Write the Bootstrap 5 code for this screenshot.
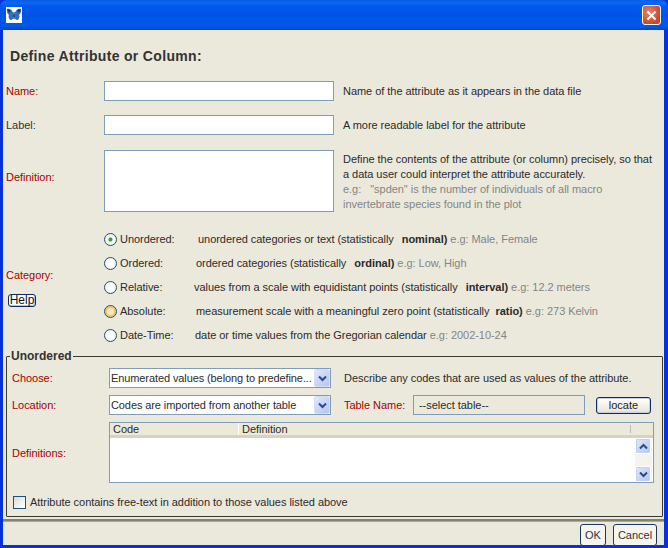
<!DOCTYPE html>
<html lang="en"><head><meta charset="utf-8"><title>Define Attribute</title>
<link rel="stylesheet" href="https://cdn.jsdelivr.net/npm/bootstrap@5.3.0/dist/css/bootstrap.min.css">
<style>
html,body{margin:0;height:548px;width:668px;overflow:hidden;background:#ebe9dc}
body{font-family:"Liberation Sans",Arial,sans-serif;font-size:11px;line-height:14px;color:#2b2b2b;letter-spacing:-.04px}
.win{width:668px;height:548px;background:#0831d9}
.ttl{height:30px;padding:0 7px 0 6px;background:linear-gradient(180deg,#0a5ae0 0,#0a6af5 3px,#0058ee 6px,#0054e3 16px,#0058e8 26px,#0046d0 30px);border-radius:7px 7px 0 0}
.ico{width:16px;height:16px;background:#fff;display:block}
.xbtn{width:19px;height:20px;padding:0;border:1px solid #fff;border-radius:3px;background:radial-gradient(circle at 35% 35%,#e8856a,#c8452a 75%);display:flex;align-items:center;justify-content:center}
.pane{margin:0 4px 3px 3px;height:515px;background:#ebe9dc}
.hd{height:51px;padding:16px 0 0 7px;font-size:14px;line-height:20px;font-weight:700;letter-spacing:.33px;margin:0;color:#333}
.frow{display:grid;grid-template-columns:89px 230px 1fr;column-gap:9px;padding-left:3px}
.lbl{color:#333}.req{color:#a80000}
.mid{align-self:center}
.ibox{display:block;width:230px;height:20px;border:1px solid #7f9db9;background:#fff;padding:0 2px;border-radius:0;font-size:11px}
.r1{height:19px;margin-bottom:15px}.r2{height:20px;margin-bottom:15px}.r3{height:62px;margin-bottom:15px}
.tarea{height:62px;resize:none}
.dfl{padding-top:20px}
.dsc{line-height:15px;padding:2px 5px 0 0}
.muted{color:#858585}
.catg{display:grid;grid-template-columns:98px 1fr;height:120px;padding-left:3px;margin-bottom:2px}
.cats{display:flex;flex-direction:column;padding-left:0}
.crow{height:24px;display:flex;align-items:center;white-space:nowrap}
.rad{appearance:none;width:13px;height:13px;margin:0 3px 0 0;flex:none;border:1px solid #1c5180;border-radius:50%;background:radial-gradient(circle,#fff 30%,#e6e4da 100%)}
.rad:checked{background:radial-gradient(circle,#2fa32f 0,#2fa32f 20%,#fff 32%,#e6e4da 100%)}
.rad.hot{box-shadow:inset 0 0 0 2px #f5c465;background:#f6e6c2}
.w78{display:inline-block;width:78px}.w76{display:inline-block;width:76px}.w74{display:inline-block;width:74px}.w75{display:inline-block;width:75px}
.bb{font-weight:700;margin:0 0 0 8px;font-size:11px}
.bb.nar{margin-left:6px}
.catl{padding-top:41px}
.hlp{display:block;height:13px;width:28px;margin:12px 0 0 2px;padding:0;font-size:12px;line-height:11px;background:#fff;border:1px solid #0a2a6a;border-radius:3px;color:#111;box-shadow:inset -1px -1px 0 #b8c4de}
.fset{margin:0 0 0 3px;width:657px;height:168px;border:1px solid #3a3a32;border-radius:1px;padding:0 5px 0 5px;display:block}
.fset legend{float:none;width:auto;margin:-7px 0 0 -2px;padding:0 1px;font-size:12px;line-height:14px;font-weight:700;color:#333;letter-spacing:0}
.gr{display:grid;grid-template-columns:97px 222px 1fr;align-items:center;height:20px;margin-bottom:7px}
.gr.top1{margin-top:5px}
.sel{display:flex;width:222px;height:20px;border:1px solid #7f9db9;background:#fff;align-items:center;padding-left:1px;white-space:nowrap;overflow:hidden;letter-spacing:-.1px}
.sel span{flex:1;min-width:0}
.arr{flex:none;width:16px;height:18px;margin-right:0;border-radius:2px;background:linear-gradient(135deg,#dfe8fb,#b3c6f0);border:1px solid #d4def7;display:flex;align-items:center;justify-content:center}
.rest{display:flex;align-items:center;padding-left:13px}
.tn{width:69px}
.ro{width:172px;height:20px;border:1px solid #7f9db9;padding:0 5px;line-height:18px}
.loc{width:55px;height:17px;margin-left:11px;padding:0;font-size:11px;line-height:13px;background:linear-gradient(180deg,#fff,#ece9d8 85%,#d6d0c0);border:1px solid #0a2a6a;border-radius:3px;color:#222;box-shadow:inset 0 0 0 1px #c5d0ee}
.tb{display:grid;grid-template-columns:97px 1fr;height:61px}
.tbl{width:545px;height:61px;border:1px solid #7f9db9;display:flex;flex-direction:column;background:#ece9d8}
.ths{display:flex;border-bottom:3px solid #d8d2c0;height:15px;line-height:13px}
.ths div:first-child{width:129px;padding-left:3px;border-right:1px solid #fff}
.ths div:nth-child(2){flex:1;padding-left:3px}
.ths div:last-child{width:23px;border-left:1px solid #bbb;height:8px;margin-top:2px}
.tbd{flex:1;display:flex;background:#fff}
.tbd>div:first-child{flex:1}
.vsb{width:17px;display:flex;flex-direction:column;justify-content:space-between;background:#f4f3ee;margin-right:1px}
.sbtn{height:16px;width:16px;background:linear-gradient(135deg,#dfe8fb,#b3c6f0);border:1px solid #fff;border-radius:2px;display:flex;align-items:center;justify-content:center;box-shadow:0 0 0 1px #c5d0ee inset}
.chk{display:flex;align-items:center;height:14px;margin:12px 0 0 1px}
.cbx{appearance:none;width:13px;height:13px;margin:0 4px 0 0;border:1px solid #1c5180;background:linear-gradient(135deg,#dcdcd4,#fff)}
.sepa{margin-top:2px;background:#85836f;border-bottom:1px solid #aca899;height:3px}
.ftr{display:flex;justify-content:flex-end;gap:7px;padding:2px 7px 0 0}
.pb{height:22px;background:#f5f4ee;border:1px solid #1c3a5a;border-radius:3px;font-size:11px;line-height:18px;padding:0;color:#333}
.ok{width:26px}.cn{width:44px}
</style></head><body>
<div class="win">
 <div class="ttl d-flex align-items-center justify-content-between">
  <svg class="ico" viewBox="0 0 16 16"><path fill="#2f6fc0" d="M1 2c3-1 6 2 6.500 5 .1 1 .1 0 .5 0s.4 1 .5 0C9 4 12 1 15 2c.5 3-.5 5-2 6 1 1 .5 4-1.500 5-1.500.5-3-1.500-3.500-3.500C7.500 11.500 6 13.500 4.500 13c-2-1-2.500-4-1.500-5C1.500 7 .5 5 1 2z"/><path fill="#10356b" d="M7.500 5h1v7h-1zM1 2l4 1-2 3zM15 2l-4 1 2 3z"/></svg>
  <button class="xbtn" aria-label="Close"><svg width="11" height="11" viewBox="0 0 11 11"><path d="M1.500 1.500l8 8M9.500 1.500l-8 8" stroke="#fff" stroke-width="2"/></svg></button>
 </div>
 <div class="pane">
  <h1 class="hd">Define Attribute or Column:</h1>
  <div class="frow r1"><div class="mid req">Name:</div><input class="ibox"><div class="mid">Name of the attribute as it appears in the data file</div></div>
  <div class="frow r2"><div class="mid lbl">Label:</div><input class="ibox"><div class="mid">A more readable label for the attribute</div></div>
  <div class="frow r3"><div class="req dfl">Definition:</div><textarea class="ibox tarea"></textarea><div class="dsc">Define the contents of the attribute (or column) precisely, so that a data user could interpret the attribute accurately.<br><span class="muted">e.g: &nbsp; "spden" is the number of individuals of all macro invertebrate species found in the plot</span></div></div>
  <div class="catg">
   <div class="catl"><div class="req">Category:</div><button class="hlp">Help</button></div>
   <div class="cats">
    <div class="crow"><input type="radio" name="c" class="rad" checked><span class="w78">Unordered:</span><span>unordered categories or text (statistically<b class="bb">nominal)</b><span class="muted"> e.g: Male, Female</span></span></div>
    <div class="crow"><input type="radio" name="c" class="rad"><span class="w76">Ordered:</span><span>ordered categories (statistically<b class="bb">ordinal)</b><span class="muted"> e.g: Low, High</span></span></div>
    <div class="crow"><input type="radio" name="c" class="rad"><span class="w74">Relative:</span><span>values from a scale with equidistant points (statistically<b class="bb">interval)</b><span class="muted"> e.g: 12.2 meters</span></span></div>
    <div class="crow"><input type="radio" name="c" class="rad hot"><span class="w76">Absolute:</span><span>measurement scale with a meaningful zero point (statistically<b class="bb nar">ratio)</b><span class="muted"> e.g: 273 Kelvin</span></span></div>
    <div class="crow"><input type="radio" name="c" class="rad"><span class="w75">Date-Time:</span><span>date or time values from the Gregorian calendar<span class="muted"> e.g: 2002-10-24</span></span></div>
   </div>
  </div>
  <fieldset class="fset">
   <legend>Unordered</legend>
   <div class="gr top1"><div class="req">Choose:</div><div class="sel"><span>Enumerated values (belong to predefine...</span><div class="arr"><svg width="9" height="7" viewBox="0 0 9 7"><path d="M1 1.500l3.500 3.500L8 1.500" fill="none" stroke="#2a4a90" stroke-width="2"/></svg></div></div><div class="rest">Describe any codes that are used as values of the attribute.</div></div>
   <div class="gr"><div class="req">Location:</div><div class="sel"><span>Codes are imported from another table</span><div class="arr"><svg width="9" height="7" viewBox="0 0 9 7"><path d="M1 1.500l3.500 3.500L8 1.500" fill="none" stroke="#2a4a90" stroke-width="2"/></svg></div></div><div class="rest"><span class="req tn">Table Name:</span><div class="ro">--select table--</div><button class="loc">locate</button></div></div>
   <div class="tb"><div class="req align-self-center">Definitions:</div><div class="tbl"><div class="ths"><div>Code</div><div>Definition</div><div></div></div><div class="tbd"><div></div><div class="vsb"><div class="sbtn"><svg width="9" height="7" viewBox="0 0 9 7"><path d="M1 5.500L4.500 2 8 5.500" fill="none" stroke="#2a4a90" stroke-width="2"/></svg></div><div class="sbtn"><svg width="9" height="7" viewBox="0 0 9 7"><path d="M1 1.500l3.500 3.500L8 1.500" fill="none" stroke="#2a4a90" stroke-width="2"/></svg></div></div></div></div></div>
   <label class="chk"><input type="checkbox" class="cbx">Attribute contains free-text in addition to those values listed above</label>
  </fieldset>
  <div class="sepa"></div>
  <div class="ftr"><button class="pb ok">OK</button><button class="pb cn">Cancel</button></div>
 </div>
</div>
</body></html>
